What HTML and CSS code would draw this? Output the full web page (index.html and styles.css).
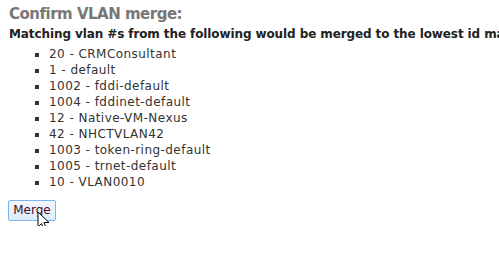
FILE: index.html
```html
<!DOCTYPE html>
<html lang="en">

<head>
    <meta charset="UTF-8">
    <title>Confirm VLAN merge</title>
    <link rel="stylesheet" href="styles.css">
</head>

<body>
    <h2 class="title">Confirm VLAN merge:</h2>
    <h4 class="subtitle">Matching vlan #s from the following would be merged to the lowest id match:</h4>

    <ul class="vlan-list">
        <li>20 - CRMConsultant</li>
        <li>1 - default</li>
        <li>1002 - fddi-default</li>
        <li>1004 - fddinet-default</li>
        <li>12 - Native-VM-Nexus</li>
        <li>42 - NHCTVLAN42</li>
        <li>1003 - token-ring-default</li>
        <li>1005 - trnet-default</li>
        <li>10 - VLAN0010</li>
    </ul>

    <div class="actions">
        <button class="merge-btn">Merge</button>
        <svg class="cursor" width="14" height="22" viewBox="0 0 14 22">
            <path d="M1 1 L1 16 L4.5 12.5 L7 19 L9.5 18 L7 11.5 L12 11.5 Z" fill="#fff" stroke="#000" stroke-width="1" stroke-linejoin="miter"/>
        </svg>
    </div>
</body>

</html>
```

FILE: styles.css
```css
body {
    font-family: "DejaVu Sans", Verdana, sans-serif;
    margin: 0;
    padding: 5px 9px;
    color: #333;
    overflow: hidden;
    white-space: nowrap;
}

.title {
    font-size: 15px;
    letter-spacing: -0.5px;
    color: #777;
    margin: 0;
    line-height: 18px;
}

.subtitle {
    font-size: 12px;
    letter-spacing: -0.1px;
    color: #222;
    margin: 3px 0 0;
    line-height: 16px;
}

.vlan-list {
    list-style: square;
    margin: 4px 0 0;
    padding-left: 40px;
    font-size: 12px;
    letter-spacing: 0.45px;
    line-height: 16px;
    color: #333;
}

.actions {
    position: relative;
    margin-top: 9px;
}

.merge-btn {
    font-family: "DejaVu Sans", Verdana, sans-serif;
    font-size: 12px;
    color: #4a0a2a;
    width: 48px;
    height: 21px;
    margin-left: -1px;
    padding: 0;
    border: 1px solid #7eb4ea;
    border-radius: 2px;
    background: linear-gradient(#f2f8fd, #dcecfc);
}

.cursor {
    position: absolute;
    left: 28px;
    top: 12px;
}
```
